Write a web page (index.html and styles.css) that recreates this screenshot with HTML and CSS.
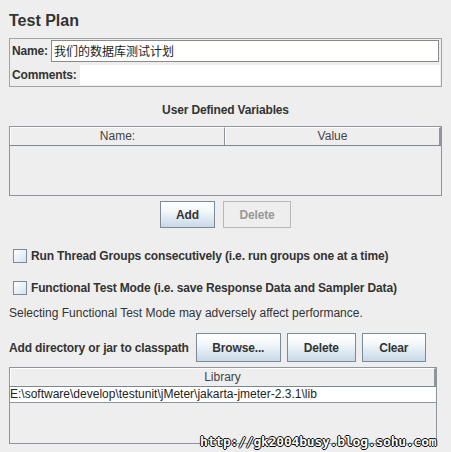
FILE: index.html
```html
<!DOCTYPE html>
<html lang="en">
<head>
    <meta charset="UTF-8">
    <title>Test Plan</title>
    <link rel="stylesheet" href="styles.css">
</head>
<body>
    <div class="page">
        <h2 class="title">Test Plan</h2>

        <div class="fields">
            <div class="field-row">
                <label class="label">Name:</label>
                <div class="text-field name-field">我们的数据库测试计划</div>
            </div>
            <div class="field-row">
                <label class="label">Comments:</label>
                <div class="text-area"></div>
            </div>
        </div>

        <div class="section-title">User Defined Variables</div>
        <div class="table vars-table">
            <div class="table-head">
                <div class="head-cell">Name:</div>
                <div class="head-cell">Value</div>
            </div>
        </div>
        <div class="button-row center">
            <button class="btn btn-add">Add</button>
            <button class="btn btn-delete" disabled>Delete</button>
        </div>

        <div class="check-row first">
            <span class="checkbox"></span>
            <span class="check-label">Run Thread Groups consecutively (i.e. run groups one at a time)</span>
        </div>
        <div class="check-row">
            <span class="checkbox"></span>
            <span class="check-label">Functional Test Mode (i.e. save Response Data and Sampler Data)</span>
        </div>
        <div class="note">Selecting Functional Test Mode may adversely affect performance.</div>

        <div class="classpath-row">
            <span class="classpath-label">Add directory or jar to classpath</span>
            <button class="btn btn-browse">Browse...</button>
            <button class="btn btn-remove">Delete</button>
            <button class="btn btn-clear">Clear</button>
        </div>
        <div class="table lib-table">
            <div class="table-head">
                <div class="head-cell">Library</div>
            </div>
            <div class="lib-row">E:\software\develop\testunit\jMeter\jakarta-jmeter-2.3.1\lib</div>
        </div>
    </div>
    <div class="watermark">http://gk2004busy.blog.sohu.com</div>
</body>
</html>
```

FILE: styles.css
```css
body {
    margin: 0;
    background: #eeeeee;
    font-family: "Liberation Sans", Arial, sans-serif;
    font-size: 12px;
    color: #333333;
    width: 451px;
    height: 452px;
    overflow: hidden;
    position: relative;
}
.page {
    padding: 0 9px;
    display: flex;
    flex-direction: column;
}
.title {
    margin: 11px 0 0 0;
    font-size: 16px;
    font-weight: bold;
    line-height: 20px;
    height: 27px;
    color: #333333;
}
.fields {
    border: 1px solid #a3a3a3;
    padding: 1px 1px 1px 1px;
    display: flex;
    flex-direction: column;
    gap: 3px;
}
.field-row {
    display: flex;
    align-items: center;
}
.label {
    font-weight: bold;
    letter-spacing: -0.15px;
    padding-left: 1px;
    margin-right: 3px;
}
.text-field {
    flex: 1;
    height: 20px;
    line-height: 20px;
    border: 1px solid #8a8a8a;
    background: #fffffe;
    padding-left: 2px;
    margin-right: 1px;
    font-family: "Noto Sans CJK SC", "Liberation Sans", sans-serif;
    font-size: 12px;
    color: #222222;
}
.text-area {
    flex: 1;
    height: 20px;
    background: #ffffff;
}
.section-title {
    text-align: center;
    font-weight: bold;
    letter-spacing: -0.15px;
    margin-top: 16px;
    line-height: 15px;
}
.table {
    border: 1px solid #8e959c;
    background: #eeeeee;
}
.vars-table {
    margin-top: 8px;
    height: 68px;
}
.table-head {
    display: flex;
    border-bottom: 1px solid #7d8791;
    background: #eeeeee;
}
.head-cell {
    flex: 1;
    text-align: center;
    height: 17px;
    line-height: 17px;
    color: #444444;
    border-left: 1px solid #ffffff;
    border-right: 1px solid #8e959c;
    border-top: 1px solid #ffffff;
}
.head-cell:last-child {
    border-right: 2px solid #8e959c;
}
.button-row {
    display: flex;
    gap: 8px;
}
.center {
    justify-content: center;
    margin-top: 5px;
}
.btn {
    font-family: "Liberation Sans", Arial, sans-serif;
    font-size: 12px;
    font-weight: bold;
    letter-spacing: -0.15px;
    color: #333333;
    border: 1px solid #7a8a99;
    background: linear-gradient(#ffffff, #f4f8fb 35%, #d6e2ee 80%, #c8d8e8);
    height: 27px;
    padding: 0;
}
.btn-add {
    width: 55px;
}
.btn-delete {
    width: 68px;
    border-color: #b8b8b8;
    background: #eeeeee;
    color: #999999;
}
.check-row {
    display: flex;
    align-items: center;
    margin-top: 13px;
    height: 19px;
}
.check-row.first {
    margin-top: 18px;
}
.checkbox {
    width: 12px;
    height: 12px;
    border: 1px solid #7a8a99;
    background: linear-gradient(135deg, #ffffff, #d6e2ee);
    margin-left: 4px;
    margin-right: 4px;
}
.check-label {
    font-weight: bold;
    letter-spacing: -0.15px;
}
.note {
    margin-top: 9px;
    line-height: 15px;
    color: #333333;
}
.classpath-row {
    display: flex;
    align-items: center;
    margin-top: 12px;
}
.classpath-label {
    font-weight: bold;
    letter-spacing: -0.15px;
    margin-right: 7px;
}
.btn-browse {
    width: 85px;
    height: 29px;
    margin-right: 6px;
}
.btn-remove {
    width: 69px;
    height: 29px;
    margin-right: 6px;
}
.btn-clear {
    width: 64px;
    height: 29px;
}
.lib-table {
    margin-top: 5px;
    margin-right: 5px;
    height: 75px;
}
.lib-row {
    background: #ffffff;
    border-bottom: 1px solid #8e959c;
    height: 15px;
    line-height: 15px;
    color: #222222;
    padding-left: 0;
}
.watermark {
    position: absolute;
    left: 200px;
    top: 434px;
    font-family: "DejaVu Sans Mono", monospace;
    font-weight: bold;
    font-size: 13px;
    letter-spacing: -0.2px;
    color: #ffffff;
    text-shadow: 1px 0 0 #000, -1px 0 0 #000, 0 1px 0 #000, 0 -1px 0 #000;
}
```
